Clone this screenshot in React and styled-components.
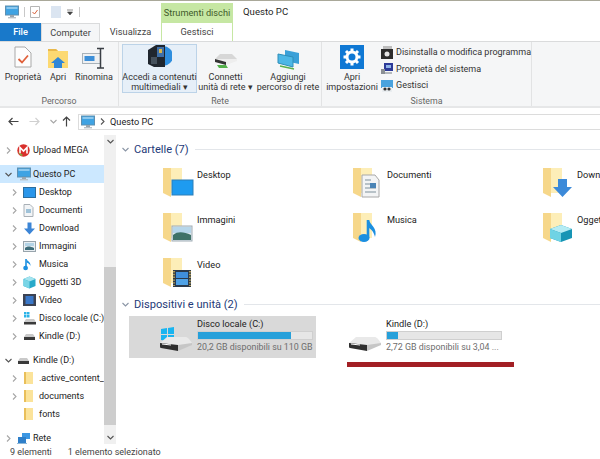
import React from 'react';
import styled, { createGlobalStyle } from 'styled-components';

const GlobalStyle = createGlobalStyle`
  html, body { margin: 0; padding: 0; background: #fff; }
  body { font-family: Roboto, "Open Sans", sans-serif; font-size: 9.2px; color: #222; }
`;

const Window = styled.div`
  width: 600px;
  height: 459px;
  overflow: hidden;
  display: flex;
  flex-direction: column;
  border-top: 1px solid #a9a899;
  box-sizing: border-box;
`;

const TitleBar = styled.div`
  height: 22px;
  display: flex;
  align-items: flex-end;
  flex-shrink: 0;
`;

const QuickAccess = styled.div`
  width: 161px;
  height: 22px;
  padding-left: 5px;
  box-sizing: border-box;
  display: flex;
  align-items: center;
  gap: 5px;
`;

const QuickSep = styled.span`
  width: 1px;
  height: 10px;
  background: #c8c8c8;
`;

const ContextLabel = styled.div`
  width: 72px;
  height: 20px;
  background: #c6e7a3;
  color: #3f5a2a;
  font-size: 9.2px;
  line-height: 20px;
  text-align: center;
  white-space: nowrap;
`;

const WindowTitle = styled.div`
  margin-left: 10px;
  height: 22px;
  line-height: 22px;
  font-size: 9.6px;
  color: #1f1f1f;
`;

const TabStrip = styled.div`
  height: 18px;
  display: flex;
  flex-shrink: 0;
`;

const Tab = styled.div`
  width: ${p => p.$w}px;
  box-sizing: border-box;
  line-height: 17px;
  text-align: center;
  font-size: 9.2px;
  color: ${p => (p.$file ? '#fff' : '#444')};
  background: ${p => (p.$file ? '#1979ca' : p.$active ? '#f5f6f7' : '#fff')};
  font-weight: ${p => (p.$file ? 500 : 400)};
  border: ${p => (p.$outlined ? '1px solid #dadbdc' : 'none')};
  border-bottom: none;
  ${p => (p.$context ? 'border-color: #c6e7a3; border-top: none;' : '')}
`;

const Ribbon = styled.div`
  height: 64px;
  display: flex;
  flex-shrink: 0;
  background: #f5f6f7;
  border-top: 1px solid #dadbdc;
  border-bottom: 2px solid #e6e7e8;
`;

const Group = styled.div`
  width: ${p => p.$w}px;
  display: flex;
  flex-direction: column;
  border-right: 1px solid #e2e3e4;
  box-sizing: border-box;
`;

const GroupBody = styled.div`
  height: 54px;
  flex-shrink: 0;
  box-sizing: border-box;
  display: flex;
  padding-left: ${p => p.$pad || 0}px;
  padding-top: 2px;
`;

const GroupLabel = styled.div`
  height: 10px;
  text-align: center;
  font-size: 8.8px;
  color: #666;
  line-height: 11px;
`;

const LargeButton = styled.div`
  width: ${p => p.$w}px;
  height: 49px;
  flex-shrink: 0;
  display: flex;
  flex-direction: column;
  align-items: center;
  box-sizing: border-box;
  text-align: center;
  font-size: 9px;
  line-height: 10px;
  color: #333;
  background: ${p => (p.$hot ? '#e6eff8' : 'transparent')};
  border: 1px solid ${p => (p.$hot ? '#bcd3e8' : 'transparent')};
  white-space: nowrap;
`;

const LargeIcon = styled.div`
  height: 27px;
  flex-shrink: 0;
  display: flex;
`;

const SmallList = styled.div`
  display: flex;
  flex-direction: column;
  gap: 2.5px;
  padding-top: 1px;
  margin-left: 4px;
`;

const SmallItem = styled.div`
  height: 14px;
  display: flex;
  align-items: center;
  gap: 3px;
  font-size: 9px;
  color: #333;
  white-space: nowrap;
`;

const NavBar = styled.div`
  height: 27px;
  display: flex;
  align-items: center;
  flex-shrink: 0;
  padding-left: 7px;
  box-sizing: border-box;
`;

const NavButton = styled.div`
  width: ${p => p.$w}px;
  display: flex;
  justify-content: center;
`;

const Address = styled.div`
  flex: 1;
  height: 14px;
  margin-left: 2px;
  border: 1px solid #dcdcdc;
  border-right: none;
  display: flex;
  align-items: center;
  padding-left: 2px;
  gap: 4px;
  font-size: 9.2px;
  color: #222;
`;

const Body = styled.div`
  flex: 1;
  display: flex;
  min-height: 0;
`;

const Sidebar = styled.div`
  width: 104px;
  flex-shrink: 0;
  padding-top: 6px;
  overflow: hidden;
  display: flex;
  flex-direction: column;
  gap: 6px;
`;

const TreeGroup = styled.div`
  display: flex;
  flex-direction: column;
`;

const TreeRow = styled.div`
  height: 18px;
  display: flex;
  align-items: center;
  white-space: nowrap;
  padding-left: ${p => (p.$level ? 11 : 5)}px;
  background: ${p => (p.$selected ? '#cce8ff' : 'transparent')};
  font-size: 9px;
  color: #222;
`;

const TreeChevron = styled.span`
  width: 12px;
  display: flex;
  flex-shrink: 0;
`;

const TreeIcon = styled.span`
  width: 16px;
  display: flex;
  flex-shrink: 0;
`;

const Scrollbar = styled.div`
  width: 12px;
  flex-shrink: 0;
  background: #f0f0f0;
  display: flex;
  flex-direction: column;
  align-items: center;
`;

const ScrollArrow = styled.div`
  height: 13px;
  display: flex;
  align-items: center;
`;

const ScrollTrack = styled.div`
  flex: 1;
  width: 100%;
  padding-bottom: 6px;
  display: flex;
  flex-direction: column;
  justify-content: flex-end;
`;

const ScrollThumb = styled.div`
  height: 158px;
  background: #cdcdcd;
`;

const Main = styled.div`
  flex: 1;
  padding: 6px 0 0 6px;
  overflow: hidden;
`;

const SectionHeader = styled.div`
  height: 16px;
  display: flex;
  align-items: center;
  gap: 5px;
  font-size: 11.1px;
  color: #1e3a78;
  white-space: nowrap;
`;

const HeaderLine = styled.span`
  flex: 1;
  height: 1px;
  background: #e3e6ea;
  margin-left: 1px;
`;

const FolderGrid = styled.div`
  display: grid;
  grid-template-columns: repeat(3, 190px);
  grid-template-rows: 45px 45px 39px;
  margin: 10px 0 0 38px;
  width: 570px;
`;

const FolderItem = styled.div`
  display: flex;
  gap: 3px;
  font-size: 9.2px;
  color: #222;
  white-space: nowrap;
`;

const FolderName = styled.span`
  line-height: 14px;
  padding-top: 1px;
`;

const DriveRow = styled.div`
  display: flex;
  margin: 4px 0 0 7px;
`;

const DriveTile = styled.div`
  width: ${p => p.$w}px;
  height: 42px;
  box-sizing: border-box;
  padding: 1px 0 0 ${p => p.$pad}px;
  display: flex;
  gap: 4px;
  background: ${p => (p.$selected ? '#d9d9d9' : 'transparent')};
  flex-shrink: 0;
`;

const DriveIconWrap = styled.div`
  padding-top: 9px;
  display: flex;
`;

const DriveInfo = styled.div`
  display: flex;
  flex-direction: column;
  width: 116px;
`;

const DriveName = styled.div`
  font-size: 9.2px;
  line-height: 13px;
  color: #222;
`;

const DriveMeter = styled.div`
  height: 9px;
  margin-top: 1px;
  background: #e6e6e6;
  border: 1px solid #cfcfcf;
  box-sizing: border-box;
`;

const DriveFill = styled.div`
  height: 100%;
  background: #26a0da;
`;

const DriveFree = styled.div`
  font-size: 8.9px;
  line-height: 13px;
  margin-top: 1px;
  color: #6d6d6d;
  white-space: nowrap;
`;

const RedMark = styled.div`
  width: 167px;
  height: 5px;
  margin: 4px 0 0 225px;
  background: #a21f24;
`;

const StatusBar = styled.div`
  height: 15px;
  flex-shrink: 0;
  display: flex;
  align-items: center;
  padding-left: 10px;
  gap: 16px;
  font-size: 9px;
  color: #444;
`;

const Chevron = ({ open, color = '#a6a6a6' }) => (
  <svg width="7" height="7" viewBox="0 0 7 7">
    <path d={open ? 'M.5 2l3 3 3-3' : 'M2 .5l3 3-3 3'} fill="none" stroke={color} strokeWidth="1.1" />
  </svg>
);

const Monitor = ({ size = 14 }) => (
  <svg width={size} height={size} viewBox="0 0 14 14">
    <rect x=".5" y="1" width="13" height="9" fill="#3fa3e3" stroke="#5f8fb0" />
    <rect x="1.5" y="2" width="11" height="2" fill="#8cc8ee" />
    <rect x="5" y="10" width="4" height="2" fill="#9aa5ad" />
    <rect x="3" y="12" width="8" height="1.4" fill="#b8c0c6" />
  </svg>
);

const SmallFolder = () => (
  <svg width="12" height="14" viewBox="0 0 12 14">
    <path d="M1 1h9v12H1z" fill="#fbe39a" />
    <path d="M1 1h2v12H1z" fill="#e9bf5a" />
  </svg>
);

const SmallDrive = () => (
  <svg width="13" height="10" viewBox="0 0 13 10">
    <path d="M3 3h7l2 3H1z" fill="#c9c9c9" />
    <rect x="1" y="6" width="11" height="3" fill="#3a3a3a" />
  </svg>
);

const TreeGlyph = ({ kind }) => {
  switch (kind) {
    case 'mega':
      return (
        <svg width="13" height="13" viewBox="0 0 13 13">
          <circle cx="6.5" cy="6.5" r="6.2" fill="#d9302c" />
          <path d="M3 9.5V3.5l3.5 3.5L10 3.5v6" fill="none" stroke="#fff" strokeWidth="1.6" />
          <path d="M1 8l3 4 2-1z" fill="#7cb342" />
        </svg>
      );
    case 'desktop':
      return (
        <svg width="13" height="11" viewBox="0 0 13 11">
          <rect x=".5" y=".5" width="12" height="10" fill="#2a96ea" stroke="#2b6d9e" />
        </svg>
      );
    case 'docs':
      return (
        <svg width="11" height="13" viewBox="0 0 11 13">
          <path d="M1 .5h6l3 3v9H1z" fill="#f2f4f6" stroke="#a9b0b6" />
          <rect x="3" y="5" width="5" height="4" fill="#9fc2d8" />
        </svg>
      );
    case 'download':
      return (
        <svg width="13" height="13" viewBox="0 0 13 13">
          <path d="M4.5.5h4v6H12l-5.5 6L1 6.5h3.5z" fill="#3c85d6" />
        </svg>
      );
    case 'images':
      return (
        <svg width="13" height="11" viewBox="0 0 13 11">
          <rect x=".5" y=".5" width="12" height="10" fill="#e8eef2" stroke="#98a4ac" />
          <path d="M2 7c2-2 5-2 9 0v2H2z" fill="#3d6d7a" />
          <rect x="2" y="2" width="9" height="3" fill="#b3d3e6" />
        </svg>
      );
    case 'music':
      return (
        <svg width="10" height="13" viewBox="0 0 10 13">
          <path d="M3 1v8" stroke="#1b8fe0" strokeWidth="1.6" />
          <ellipse cx="2.6" cy="10" rx="2.4" ry="2.2" fill="#1b8fe0" />
          <path d="M3.5 1c.5 2 4.5 3 4 7-.5-2-2.5-3-4-3.5z" fill="#1b8fe0" />
        </svg>
      );
    case 'cube':
      return (
        <svg width="13" height="13" viewBox="0 0 13 13">
          <path d="M6.5.5l6 2.5v7l-6 2.5-6-2.5V3z" fill="#28a9c9" />
          <path d="M.5 3l6 2.5 6-2.5-6-2.5z" fill="#a5e4ef" />
          <path d="M.5 3l6 2.5v7l-6-2.5z" fill="#79d5e6" />
        </svg>
      );
    case 'video':
      return (
        <svg width="13" height="12" viewBox="0 0 13 12">
          <rect width="13" height="12" fill="#3c4353" />
          <rect x="2.5" y="2" width="8" height="8" fill="#3a78c9" />
        </svg>
      );
    case 'win':
      return (
        <svg width="14" height="13" viewBox="0 0 14 13">
          <rect x="1" y="0" width="2.5" height="2.5" fill="#2bb3e8" />
          <rect x="4" y="0" width="2.5" height="2.5" fill="#2bb3e8" />
          <rect x="1" y="3" width="2.5" height="2.5" fill="#2bb3e8" />
          <rect x="4" y="3" width="2.5" height="2.5" fill="#2bb3e8" />
          <path d="M3 7h8l2 3H1z" fill="#c9c9c9" />
          <rect x="1" y="10" width="12" height="2.5" fill="#3a3a3a" />
        </svg>
      );
    case 'drive':
      return <SmallDrive />;
    case 'folder':
      return <SmallFolder />;
    case 'network':
      return (
        <svg width="14" height="13" viewBox="0 0 14 13">
          <rect x="5" y="1" width="8" height="6" fill="#3b97e3" />
          <rect x="1" y="5" width="8" height="6" fill="#2f7fc9" />
          <rect x="0" y="11" width="10" height="1.5" fill="#8fb8d8" />
        </svg>
      );
    default:
      return <Monitor />;
  }
};

const Overlay = ({ kind }) => {
  switch (kind) {
    case 'desktop':
      return <rect x="9" y="13" width="21" height="15" fill="#1e9bf0" stroke="#2c7fb8" />;
    case 'docs':
      return (
        <g>
          <path d="M9 8h13l4 5v17H9z" fill="#f3f4f5" stroke="#a8a8a8" />
          <path d="M12 13h6M12 17h11M12 21h11M12 25h11" stroke="#7f8f9c" strokeWidth="1.2" />
          <rect x="17" y="16" width="6" height="5" fill="#4a83b5" />
        </g>
      );
    case 'download':
      return <path d="M15 12h9v8h5l-9.5 10L10 20h5z" fill="#3c8ad9" />;
    case 'images':
      return (
        <g>
          <rect x="9" y="14" width="20" height="15" fill="#dfe9ef" stroke="#a0acb4" />
          <rect x="10" y="15" width="18" height="6" fill="#b6d6ea" />
          <path d="M10 23c5-4 11-3 18 0v5H10z" fill="#3f7268" />
        </g>
      );
    case 'music':
      return (
        <g>
          <path d="M15 8v18" stroke="#1b8fe0" strokeWidth="2.6" />
          <ellipse cx="11" cy="26" rx="5.5" ry="4" fill="#1b8fe0" />
          <path d="M16 8c1 5 9 8 6 17-1-5-4-8-6-9z" fill="#1b8fe0" />
        </g>
      );
    case 'cube':
      return (
        <g>
          <path d="M18 13l11 4v9l-11 4-11-4v-9z" fill="#1795b5" />
          <path d="M7 17l11 4 11-4-11-4z" fill="#b5ecf4" />
          <path d="M7 17l11 4v9l-11-4z" fill="#6fd3e4" />
        </g>
      );
    default:
      return (
        <g>
          <rect x="10" y="13" width="18" height="17" fill="#2b3a4c" />
          <rect x="13" y="15" width="12" height="6" fill="#3f8fdc" />
          <rect x="13" y="22" width="12" height="6" fill="#4fa2e6" />
          <path d="M11 14v15M27 14v15" stroke="#e6c15a" strokeWidth="1.4" strokeDasharray="1.4 1.4" />
        </g>
      );
  }
};

const FolderIcon = ({ kind }) => (
  <svg width="34" height="31" viewBox="0 0 34 31">
    <path d="M3 1h19v25H3z" fill="#fdeeb8" />
    <path d="M3 1h8v29l-8-4z" fill="#f6d78a" />
    <g transform="translate(3 0)">
      <Overlay kind={kind} />
    </g>
  </svg>
);

const DriveIcon = ({ windows }) => (
  <svg width="34" height="26" viewBox="0 0 34 26">
    {windows && (
      <path
        d="M2 3l6-1v6H2zM9 2l6-1v7H9zM2 9h6v6l-6-1zM9 9h6v7l-6-1z"
        fill="#19b4f0"
      />
    )}
    <path d="M8 11h19c1 0 2 1 3 2l3 4c0 1-1 2-2 2H3c-2 0-2-1-2-2z" fill="#e9e9e9" />
    <path d="M1 17l18 2v6L2 22c-1 0-1-1-1-2z" fill="#2f2f2f" />
    <path d="M19 19l14-2v2l-14 6z" fill="#c6c6c6" />
    <path d="M3 18l9 1" stroke="#fff" strokeWidth="1" />
  </svg>
);

const PropertiesIcon = () => (
  <svg width="18" height="25" viewBox="0 0 18 25">
    <path d="M1 2h10l6 6v14H1z" fill="#fdfdfd" stroke="#a9a9a9" />
    <path d="M4.500 14l3.500 3.500 6-7" fill="none" stroke="#e0603a" strokeWidth="1.8" />
  </svg>
);

const OpenIcon = () => (
  <svg width="22" height="25" viewBox="0 0 22 25">
    <path d="M1 4h8l2 2h10v17H1z" fill="#fcd972" />
    <path d="M1 4h8l2 2H1z" fill="#e9b94c" />
    <path d="M4 18l7-6 7 6h-3v5H7v-5z" fill="#2f87d8" />
  </svg>
);

const RenameIcon = () => (
  <svg width="24" height="25" viewBox="0 0 24 25">
    <rect x=".5" y="8.500" width="18" height="10" fill="#eef0f2" stroke="#a9b2b9" />
    <rect x="2.500" y="11" width="10" height="5" fill="#3d8fd8" />
    <path d="M15 3.500h7M15 23h7M18.500 3.500V23" stroke="#3a3f45" strokeWidth="1.5" fill="none" />
  </svg>
);

const MediaIcon = () => (
  <svg width="24" height="25" viewBox="0 0 24 25">
    <path d="M15 1a10 10 0 0 1 0 20z" fill="#2f8ede" />
    <path d="M0 5l8-5h9v22H6l-6-3z" fill="#20262e" />
    <rect x="9" y="2" width="7" height="10" fill="#3f6fa8" />
    <rect x="11" y="4" width="3" height="4" fill="#d9b54a" />
    <rect x="3" y="12" width="6" height="7" fill="#46515c" />
  </svg>
);

const MapDriveIcon = () => (
  <svg width="24" height="25" viewBox="0 0 24 25">
    <path d="M6 9h12l5 5H1z" fill="#d7d7d7" />
    <path d="M1 14h22v2L12 20 1 17z" fill="#eee" />
    <path d="M1 14l11 3v3L1 17z" fill="#333" />
    <path d="M3 20h9l2 3H5z" fill="#53b04a" />
  </svg>
);

const AddLocationIcon = () => (
  <svg width="24" height="25" viewBox="0 0 24 25">
    <path d="M9 5l14 3v11L9 16z" fill="#3ba0d8" />
    <path d="M2 9l15 3v10L2 18z" fill="#4db7e6" stroke="#2e8eb8" />
    <path d="M4 21l14 3" stroke="#5ab04c" strokeWidth="1.4" />
  </svg>
);

const GearIcon = () => (
  <svg width="24" height="24" viewBox="0 0 24 24">
    <rect width="24" height="24" fill="#0f78d4" />
    <g fill="none" stroke="#fff">
      <circle cx="12" cy="12" r="5" strokeWidth="3" />
      <path d="M12 3.500v3M12 17.500v3M3.500 12h3M17.500 12h3M6 6l2.200 2.200M15.800 15.800L18 18M18 6l-2.200 2.200M8.200 15.800L6 18" strokeWidth="3" />
    </g>
  </svg>
);

const UninstallIcon = () => (
  <svg width="12" height="13" viewBox="0 0 12 13">
    <rect x="2" y="0" width="9" height="4" fill="#bdbdbd" />
    <rect x="0" y="3" width="12" height="10" fill="#2c2c2c" />
    <circle cx="6" cy="8" r="2.500" fill="#e6e6e6" />
  </svg>
);

const SystemIcon = () => (
  <svg width="12" height="13" viewBox="0 0 12 13">
    <rect x="3" y="1" width="9" height="8" fill="#2c3a98" />
    <rect x="5" y="3" width="5" height="3" fill="#8fb4e8" />
    <rect x="0" y="7" width="4" height="5" fill="#8a8f94" />
    <rect x="4" y="10" width="7" height="2" fill="#b5b9bd" />
  </svg>
);

const ManageIcon = () => (
  <svg width="12" height="13" viewBox="0 0 12 13">
    <rect x="0" y="1" width="12" height="8" fill="#4aa3de" />
    <rect x="1" y="8" width="10" height="5" fill="#e9edf0" />
    <circle cx="4" cy="10" r="1.600" fill="#333" />
    <circle cx="8" cy="10" r="1.600" fill="#333" />
  </svg>
);

const folders = [
  ['Desktop', 'desktop'],
  ['Documenti', 'docs'],
  ['Download', 'download'],
  ['Immagini', 'images'],
  ['Musica', 'music'],
  ['Oggetti 3D', 'cube'],
  ['Video', 'video'],
];

const pcChildren = [
  ['Desktop', 'desktop'],
  ['Documenti', 'docs'],
  ['Download', 'download'],
  ['Immagini', 'images'],
  ['Musica', 'music'],
  ['Oggetti 3D', 'cube'],
  ['Video', 'video'],
  ['Disco locale (C:)', 'win'],
  ['Kindle (D:)', 'drive'],
];

const Row = ({ label, kind, level, open, selected, noChevron }) => (
  <TreeRow $level={level} $selected={selected}>
    <TreeChevron>{!noChevron && <Chevron open={open} color={open ? '#555' : '#a6a6a6'} />}</TreeChevron>
    <TreeIcon>
      <TreeGlyph kind={kind} />
    </TreeIcon>
    {label}
  </TreeRow>
);

const Drive = ({ name, free, pct, selected, windows, w, pad }) => (
  <DriveTile $selected={selected} $w={w} $pad={pad}>
    <DriveIconWrap>
      <DriveIcon windows={windows} />
    </DriveIconWrap>
    <DriveInfo>
      <DriveName>{name}</DriveName>
      <DriveMeter>
        <DriveFill style={{ width: `${pct}%` }} />
      </DriveMeter>
      <DriveFree>{free}</DriveFree>
    </DriveInfo>
  </DriveTile>
);

export default function App() {
  return (
    <Window>
      <GlobalStyle />
      <TitleBar>
        <QuickAccess>
          <Monitor />
          <QuickSep />
          <svg width="10" height="12" viewBox="0 0 10 12">
            <path d="M.5.5h9v11h-9z" fill="#fff" stroke="#b5b5b5" />
            <path d="M2.500 6l2 2 3-4" fill="none" stroke="#d9603a" />
          </svg>
          <svg width="11" height="13" viewBox="0 0 11 13" style={{ marginLeft: 6 }}>
            <rect width="10" height="12" fill="#dbe5f1" />
          </svg>
          <svg width="7" height="7" viewBox="0 0 7 7">
            <path d="M0 1h6M.5 3h5l-2.500 3z" fill="#444" stroke="#444" strokeWidth=".6" />
          </svg>
          <QuickSep />
        </QuickAccess>
        <ContextLabel>Strumenti dischi</ContextLabel>
        <WindowTitle>Questo PC</WindowTitle>
      </TitleBar>

      <TabStrip>
        <Tab $w={41} $file>File</Tab>
        <Tab $w={59} $active $outlined>Computer</Tab>
        <Tab $w={61}>Visualizza</Tab>
        <Tab $w={72} $outlined $context>Gestisci</Tab>
      </TabStrip>

      <Ribbon>
        <Group $w={119}>
          <GroupBody $pad={5}>
            <LargeButton $w={36}><LargeIcon><PropertiesIcon /></LargeIcon>Proprietà</LargeButton>
            <LargeButton $w={34}><LargeIcon><OpenIcon /></LargeIcon>Apri</LargeButton>
            <LargeButton $w={38}><LargeIcon><RenameIcon /></LargeIcon>Rinomina</LargeButton>
          </GroupBody>
          <GroupLabel>Percorso</GroupLabel>
        </Group>
        <Group $w={203}>
          <GroupBody $pad={3}>
            <LargeButton $w={75} $hot><LargeIcon><MediaIcon /></LargeIcon>Accedi a contenuti<br />multimediali ▾</LargeButton>
            <LargeButton $w={57}><LargeIcon><MapDriveIcon /></LargeIcon>Connetti<br />unità di rete ▾</LargeButton>
            <LargeButton $w={68}><LargeIcon><AddLocationIcon /></LargeIcon>Aggiungi<br />percorso di rete</LargeButton>
          </GroupBody>
          <GroupLabel>Rete</GroupLabel>
        </Group>
        <Group $w={210}>
          <GroupBody $pad={5}>
            <LargeButton $w={50}><LargeIcon><GearIcon /></LargeIcon>Apri<br />impostazioni</LargeButton>
            <SmallList>
              <SmallItem><UninstallIcon />Disinstalla o modifica programma</SmallItem>
              <SmallItem><SystemIcon />Proprietà del sistema</SmallItem>
              <SmallItem><ManageIcon />Gestisci</SmallItem>
            </SmallList>
          </GroupBody>
          <GroupLabel>Sistema</GroupLabel>
        </Group>
      </Ribbon>

      <NavBar>
        <NavButton $w={13}>
          <svg width="11" height="9" viewBox="0 0 11 9"><path d="M10.500 4.500H1M4.500 1L1 4.500 4.500 8" fill="none" stroke="#444" strokeWidth="1.2" /></svg>
        </NavButton>
        <NavButton $w={29}>
          <svg width="11" height="9" viewBox="0 0 11 9"><path d="M.5 4.500H10M6.500 1L10 4.500 6.500 8" fill="none" stroke="#d0d0d0" strokeWidth="1.2" /></svg>
        </NavButton>
        <NavButton $w={8}><Chevron open /></NavButton>
        <NavButton $w={19}>
          <svg width="9" height="11" viewBox="0 0 9 11"><path d="M4.500 10.500V1M1 4.500L4.500 1 8 4.500" fill="none" stroke="#444" strokeWidth="1.2" /></svg>
        </NavButton>
        <Address>
          <Monitor />
          <Chevron color="#555" />
          Questo PC
        </Address>
      </NavBar>

      <Body>
        <Sidebar>
          <TreeGroup><Row label="Upload MEGA" kind="mega" /></TreeGroup>
          <TreeGroup>
            <Row label="Questo PC" kind="pc" open selected />
            {pcChildren.map(([label, kind]) => <Row key={label} label={label} kind={kind} level={1} />)}
          </TreeGroup>
          <TreeGroup>
            <Row label="Kindle (D:)" kind="drive" open />
            <Row label=".active_content_" kind="folder" level={1} />
            <Row label="documents" kind="folder" level={1} />
            <Row label="fonts" kind="folder" level={1} noChevron />
          </TreeGroup>
          <TreeGroup><Row label="Rete" kind="network" /></TreeGroup>
        </Sidebar>

        <Scrollbar>
          <ScrollArrow><Chevron open color="#555" /></ScrollArrow>
          <ScrollTrack><ScrollThumb /></ScrollTrack>
          <ScrollArrow><Chevron open color="#555" /></ScrollArrow>
        </Scrollbar>

        <Main>
          <SectionHeader>
            <Chevron open color="#8a95a5" />
            Cartelle (7)
            <HeaderLine />
          </SectionHeader>
          <FolderGrid>
            {folders.map(([name, kind]) => (
              <FolderItem key={name}>
                <FolderIcon kind={kind} />
                <FolderName>{name}</FolderName>
              </FolderItem>
            ))}
          </FolderGrid>
          <SectionHeader>
            <Chevron open color="#8a95a5" />
            Dispositivi e unità (2)
            <HeaderLine />
          </SectionHeader>
          <DriveRow>
            <Drive name="Disco locale (C:)" free="20,2 GB disponibili su 110 GB" pct={82} selected windows w={187} pad={30} />
            <Drive name="Kindle (D:)" free="2,72 GB disponibili su 3,04 ..." pct={10} w={190} pad={32} />
          </DriveRow>
          <RedMark />
        </Main>
      </Body>

      <StatusBar>
        <span>9 elementi</span>
        <span>1 elemento selezionato</span>
      </StatusBar>
    </Window>
  );
}
